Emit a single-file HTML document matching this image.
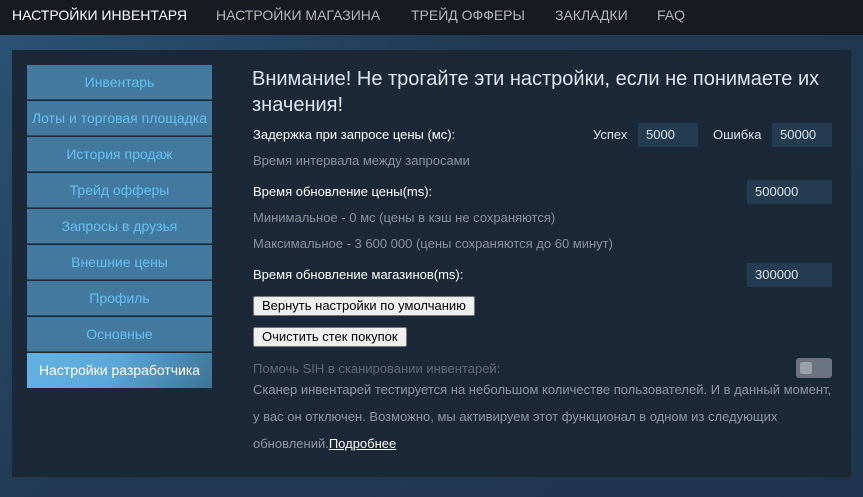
<!DOCTYPE html>
<html><head><meta charset="utf-8"><style>
*{margin:0;padding:0;box-sizing:border-box}
body{width:863px;height:497px;overflow:hidden;font-family:"Liberation Sans",sans-serif;background:linear-gradient(135deg,#2a5476 0%,#213952 40%,#1f354d 100%);position:relative}
.top{position:absolute;left:0;top:0;width:863px;height:35px;background:#171a21}
.top span{position:absolute;top:7px;font-size:14px;color:#b8b6b4}
.panel{position:absolute;left:12px;top:50px;width:839px;height:427px;background:#1b2838}
.side{position:absolute;left:27px;top:65px;width:185px}
.side div{height:35px;margin-bottom:1px;background:#43799f;color:#66c0f4;font-size:14px;text-align:center;line-height:34px;border-bottom:1px solid #2a4660}
.side div.act{background:linear-gradient(120deg,#62b3e3 0%,#5aa8d8 45%,#3f7396 100%);color:#fff;border:none}
.t{position:absolute;font-size:13px;color:#fff}
.g{position:absolute;font-size:13px;color:#8b929a}
.in{position:absolute;height:24px;background:#233c52;color:#dbe6ef;font-size:13px;padding-left:8px;line-height:24px}
.btn{position:absolute;left:253px;height:20px;background:#efefef;border:1px solid #767676;border-radius:2px;color:#000;font-size:13px;padding:0 6px;line-height:18px}
h1{position:absolute;left:252px;top:66px;width:590px;font-size:20px;font-weight:normal;color:#dbe6f0;line-height:26px}
</style></head><body>
<div class="top">
<span style="left:12px;color:#fff">НАСТРОЙКИ ИНВЕНТАРЯ</span>
<span style="left:216px">НАСТРОЙКИ МАГАЗИНА</span>
<span style="left:411px">ТРЕЙД ОФФЕРЫ</span>
<span style="left:555px">ЗАКЛАДКИ</span>
<span style="left:657px">FAQ</span>
</div>
<div class="panel"></div>
<div class="side">
<div>Инвентарь</div><div>Лоты и торговая площадка</div><div>История продаж</div><div>Трейд офферы</div><div>Запросы в друзья</div><div>Внешние цены</div><div>Профиль</div><div>Основные</div><div class="act">Настройки разработчика</div>
</div>
<h1>Внимание! Не трогайте эти настройки, если не понимаете их значения!</h1>
<div class="t" style="left:253px;top:127px">Задержка при запросе цены (мс):</div>
<div class="t" style="left:593px;top:127px;color:#dbe6f0">Успех</div>
<div class="in" style="left:638px;top:123px;width:60px">5000</div>
<div class="t" style="left:713px;top:127px;color:#dbe6f0">Ошибка</div>
<div class="in" style="left:772px;top:123px;width:60px">50000</div>
<div class="g" style="left:253px;top:153px">Время интервала между запросами</div>
<div class="t" style="left:253px;top:184px">Время обновление цены(ms):</div>
<div class="in" style="left:747px;top:180px;width:85px">500000</div>
<div class="g" style="left:253px;top:210px">Минимальное - 0 мс (цены в кэш не сохраняются)</div>
<div class="g" style="left:253px;top:236px">Максимальное - 3 600 000 (цены сохраняются до 60 минут)</div>
<div class="t" style="left:253px;top:267px">Время обновление магазинов(ms):</div>
<div class="in" style="left:747px;top:263px;width:85px">300000</div>
<div class="btn" style="top:296px;padding:0 8px">Вернуть настройки по умолчанию</div>
<div class="btn" style="top:327px;padding:0 8px">Очистить стек покупок</div>
<div class="g" style="left:253px;top:361px;color:#5f6b77">Помочь SIH в сканировании инвентарей:</div>
<div style="position:absolute;left:796px;top:358px;width:36px;height:20px;background:#6b7280;border-radius:3px"><div style="position:absolute;left:4px;top:4px;width:12px;height:12px;background:#9aa0a8;border-radius:2px"></div></div>
<div class="g" style="left:253px;top:376px;line-height:27px;width:586px;color:#8f98a0">Сканер инвентарей тестируется на небольшом количестве пользователей. И в данный момент, у вас он отключен. Возможно, мы активируем этот функционал в одном из следующих обновлений.<u style="color:#fff">Подробнее</u></div>
</body></html>
